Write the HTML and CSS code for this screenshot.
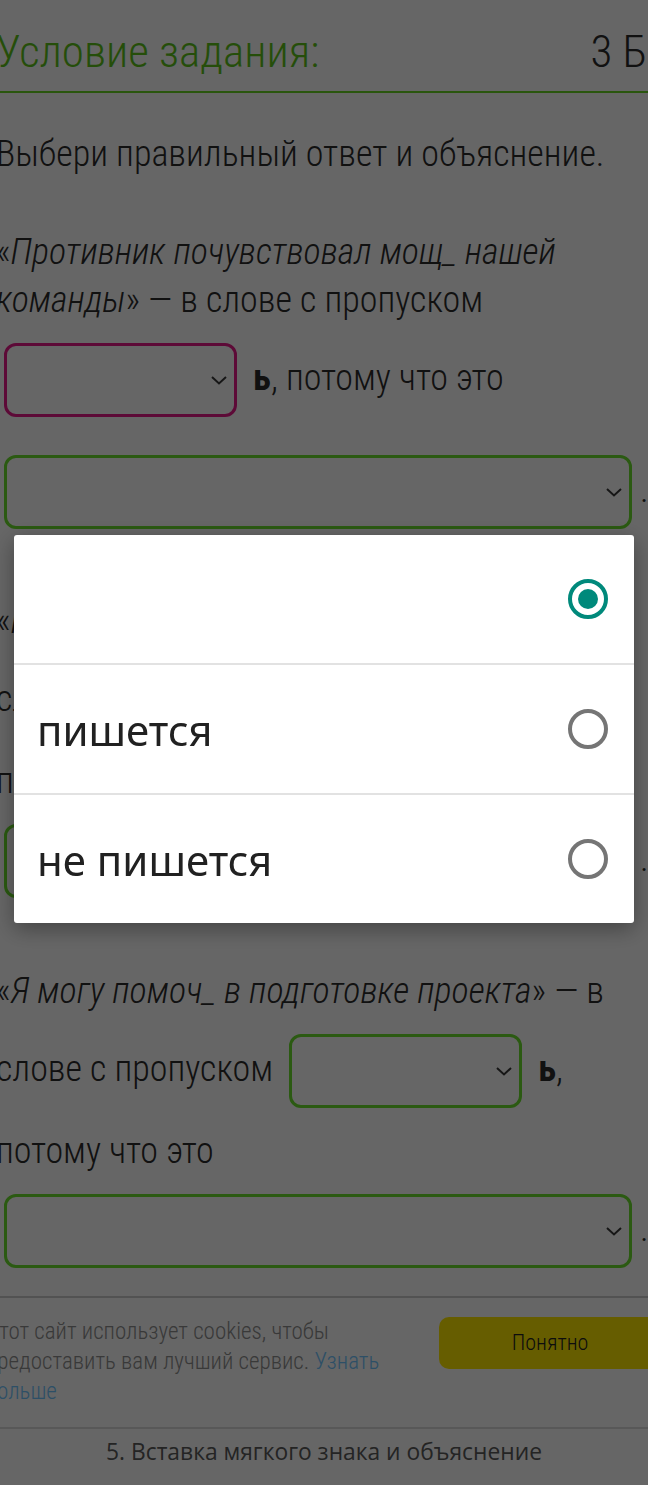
FILE: index.html
```html
<!DOCTYPE html>
<html lang="ru">
<head>
<meta charset="utf-8">
<title>Вставка мягкого знака и объяснение</title>
<link rel="stylesheet" href="styles.css">
</head>
<body>
<div class="viewport">
  <header class="task-head">
    <h1 class="task-title">Условие задания:</h1>
    <span class="task-score">3 Б.</span>
  </header>

  <main class="task">
    <p class="intro">Выбери правильный ответ и объяснение.</p>

    <p class="item">«<i>Противник почувствовал мощ_ нашей команды</i>» — в слове с пропуском <span class="pick pick--short pick--wrong"><svg class="chev" viewBox="0 0 18 10"><path d="M2 2 9 8.5 16 2"/></svg></span> <b>ь</b>, потому что это <span class="pick pick--wide"><svg class="chev" viewBox="0 0 18 10"><path d="M2 2 9 8.5 16 2"/></svg></span>.</p>

    <p class="item">«<i>Нужно срочно испеч_ торт к ужину</i>» — в слове с пропуском <span class="pick pick--short"><svg class="chev" viewBox="0 0 18 10"><path d="M2 2 9 8.5 16 2"/></svg></span> <b>ь</b>, потому что это <span class="pick pick--wide"><svg class="chev" viewBox="0 0 18 10"><path d="M2 2 9 8.5 16 2"/></svg></span>.</p>

    <p class="item">«<i>Я могу помоч_ в подготовке проекта</i>» — в слове с пропуском <span class="pick pick--short"><svg class="chev" viewBox="0 0 18 10"><path d="M2 2 9 8.5 16 2"/></svg></span> <b>ь</b>, потому что это <span class="pick pick--wide"><svg class="chev" viewBox="0 0 18 10"><path d="M2 2 9 8.5 16 2"/></svg></span>.</p>
  </main>

  <aside class="cookie">
    <p class="cookie-text">Этот сайт использует cookies, чтобы предоставить вам лучший сервис. <a href="#" class="cookie-link">Узнать больше</a></p>
    <button class="cookie-btn" type="button">Понятно</button>
  </aside>

  <footer class="task-foot">5. Вставка мягкого знака и объяснение</footer>
</div>

<div class="scrim"></div>

<ul class="options" role="listbox">
  <li class="option" role="option" aria-selected="true"><span class="option-label"></span><span class="radio radio--on"></span></li>
  <li class="option" role="option"><span class="option-label">пишется</span><span class="radio"></span></li>
  <li class="option" role="option"><span class="option-label">не пишется</span><span class="radio"></span></li>
</ul>
</body>
</html>
```

FILE: styles.css
```css
html, body {
  margin: 0;
  padding: 0;
  background: #fff;
}

body {
  width: 648px;
  height: 1485px;
  overflow: hidden;
  font-family: "Roboto Condensed", "Roboto", "Liberation Sans Narrow", sans-serif;
  font-stretch: condensed;
  font-weight: 300;
  color: #2c2c2c;
}

/* document is wider than the screen and sits scrolled 20px to the right */
.viewport {
  width: 688px;
  margin-left: -20px;
}

.task-head {
  display: flex;
  justify-content: space-between;
  align-items: baseline;
  padding: 28px 10px 15px 16px;
  border-bottom: 2px solid #6ad824;
  font-size: 45px;
  line-height: 48px;
}

.task-title {
  margin: 0;
  font-size: inherit;
  font-weight: 300;
  color: #5ec41a;
}

.task-score {
  color: #2c2c2c;
}

.task {
  padding: 0 16px;
  font-size: 36px;
  line-height: 48px;
}

.intro {
  margin: 37px 0 49.5px;
}

.item {
  margin: 0 0 49.5px;
}

.item:last-child {
  margin-bottom: 9px;
}

.item b {
  font-weight: 700;
}

/* closed dropdowns */
.pick {
  display: inline-flex;
  justify-content: flex-end;
  align-items: center;
  box-sizing: border-box;
  height: 74px;
  margin: 19px 8px;
  padding-right: 6px;
  border: 3px solid #6be12d;
  border-radius: 12px;
  vertical-align: middle;
}

.pick--short {
  width: 233px;
}

.pick--wide {
  width: 628px;
}

.pick--wrong {
  border-color: #e8198b;
}

.chev {
  width: 18px;
  height: 10px;
  fill: none;
  stroke: #383838;
  stroke-width: 2;
}

/* cookie notice */
.cookie {
  display: flex;
  align-items: flex-start;
  gap: 27px;
  padding: 19px 7px 20px 6px;
  border-top: 2px solid #cdcdcd;
  border-bottom: 2px solid #dcdcdc;
  font-size: 23px;
  line-height: 30px;
}

.cookie-text {
  flex: 1;
  margin: 0;
  color: #8e8e8e;
}

.cookie-link {
  color: #72c6ff;
  text-decoration: none;
}

.cookie-btn {
  flex: none;
  width: 222px;
  height: 52px;
  border: 0;
  border-radius: 10px;
  background: #ffe900;
  font: inherit;
  font-size: 22px;
  color: #222;
}

.task-foot {
  padding-bottom: 9px;
  font-family: "Open Sans", "Noto Sans", sans-serif;
  font-stretch: normal;
  font-weight: 400;
  font-size: 22.8px;
  line-height: 46px;
  text-align: center;
  color: #5a5a5a;
}

/* modal dim layer */
.scrim {
  position: fixed;
  inset: 0;
  background: rgba(0, 0, 0, 0.6);
}

/* open option list of the dropdown */
.options {
  position: fixed;
  left: 14px;
  top: 535px;
  width: 620px;
  margin: 0;
  padding: 0;
  list-style: none;
  background: #fff;
  border-radius: 3px;
  box-shadow: 0 6px 22px rgba(0, 0, 0, 0.35);
  font-family: "Noto Sans", "Open Sans", sans-serif;
  font-stretch: normal;
  font-weight: 400;
  font-size: 42px;
  color: #212121;
}

.option {
  display: flex;
  align-items: center;
  justify-content: space-between;
  height: 128px;
  padding: 0 26px 0 23px;
}

.option + .option {
  border-top: 2px solid #e2e2e2;
}

.radio {
  display: grid;
  place-items: center;
  box-sizing: border-box;
  width: 40px;
  height: 40px;
  border: 4px solid #757575;
  border-radius: 50%;
}

.radio--on {
  border-color: #00897b;
}

.radio--on::after {
  content: "";
  width: 20px;
  height: 20px;
  border-radius: 50%;
  background: #00897b;
}
```
